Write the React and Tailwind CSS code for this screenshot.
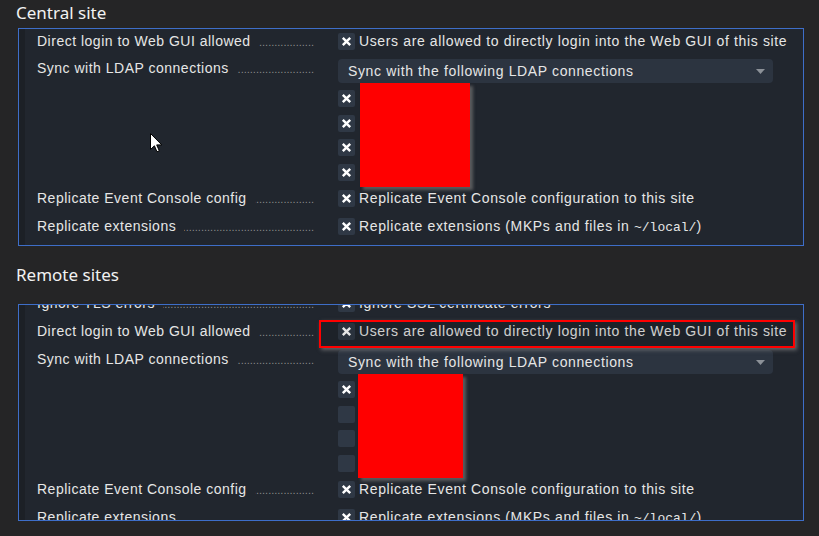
import React from "react";

const FONT = "font-['Liberation_Sans',Arial,sans-serif] text-[14px] text-[#e6e6e6]";
const TXT = `${FONT} tracking-[0.5px]`;
const VTXT = `${FONT} tracking-[0.63px]`;

function XBox({ checked = true }) {
  return (
    <div className="w-[17px] h-[17px] rounded-[2px] bg-[#2f3845] flex items-center justify-center shrink-0">
      {checked && (
        <svg width="17" height="17" viewBox="0 0 17 17">
          <path d="M4.8 4.8 L12.2 12.2 M12.2 4.8 L4.8 12.2" stroke="#ffffff" strokeWidth="2.4" strokeLinecap="butt" />
        </svg>
      )}
    </div>
  );
}

function Label({ text, top = false }) {
  return (
    <div className={`w-[289px] pl-[12px] flex items-baseline shrink-0 ${top ? "self-start leading-[18px]" : ""}`}>
      <span className={`${TXT} whitespace-nowrap`}>{text}</span>
      <div className="flex-1 ml-[8px] flex justify-end overflow-hidden">
        <span className="whitespace-nowrap font-['Liberation_Sans',Arial,sans-serif] text-[11px] text-[#8a8a8a]">
          {".".repeat(120)}
        </span>
      </div>
    </div>
  );
}

function CheckRow({ label, value, h, children }) {
  return (
    <div className={`relative flex items-center shrink-0 ${h}`}>
      <Label text={label} />
      <div className="ml-[24px] flex items-center gap-[4px]">
        <XBox />
        <span className={`${VTXT} whitespace-nowrap`}>{value}</span>
      </div>
      {children}
    </div>
  );
}

function Dropdown({ mt }) {
  return (
    <div className={`flex shrink-0 ${mt}`}>
      <Label text="Sync with LDAP connections" top />
      <div className="ml-[24px] w-[435px] h-[24px] rounded-[4px] bg-[#2c3440] flex items-center justify-between pl-[10px] pr-[8px]">
        <span className={`${VTXT} whitespace-nowrap`}>Sync with the following LDAP connections</span>
        <svg width="9" height="5" viewBox="0 0 9 5">
          <path d="M0 0 L9 0 L4.5 5 Z" fill="#8c9198" />
        </svg>
      </div>
    </div>
  );
}

function LdapList({ checks, redMl, redW }) {
  return (
    <div className="flex shrink-0 mt-[3px]">
      <div className="w-[289px] shrink-0" />
      <div className="ml-[24px] flex">
        <div className="flex flex-col">
          {checks.map((c, i) => (
            <div key={i} className="h-[24.7px] flex items-center shrink-0">
              <XBox checked={c} />
            </div>
          ))}
        </div>
        <div className={`${redMl} ${redW} -mt-[3px] -mb-[2.2px] h-[104px] bg-[#ff0000] shadow-[3px_3px_3px_rgba(110,110,110,0.75)]`} />
      </div>
    </div>
  );
}

function Replicate() {
  return (
    <>
      <CheckRow h="h-[28px]" label="Replicate Event Console config" value="Replicate Event Console configuration to this site" />
      <CheckRow
        h="h-[28px]"
        label="Replicate extensions"
        value={
          <>
            Replicate extensions (MKPs and files in{" "}
            <span className="font-['Liberation_Mono',monospace] text-[13px] tracking-normal">~/local/</span>)
          </>
        }
      />
    </>
  );
}

function Heading({ children, cls = "" }) {
  return (
    <div className={`h-[28px] pl-[16px] pt-[1px] ${cls}`}>
      <span className="font-['Noto_Sans',sans-serif] text-[17px] leading-[24px] text-[#f2f2f2]">{children}</span>
    </div>
  );
}

export default function App() {
  return (
    <div className="w-[819px] h-[536px] bg-[#252526] overflow-hidden">
      <Heading>Central site</Heading>
      <div className="relative ml-[18px] w-[786px] h-[218px] border border-[#3e6ec8] bg-[#21262e] flex">
        <div className="w-[6px] bg-[#1c2026] shrink-0" />
        <div className="flex-1 flex flex-col pt-[2px]">
          <CheckRow h="h-[20px]" label="Direct login to Web GUI allowed" value="Users are allowed to directly login into the Web GUI of this site" />
          <Dropdown mt="mt-[8px]" />
          <LdapList checks={[true, true, true, true]} redMl="ml-[5px]" redW="w-[110px]" />
          <Replicate />
        </div>
        <svg className="absolute left-[131px] top-[104px]" width="13" height="20" viewBox="0 0 13 20">
          <path d="M0.5 0.5 L0.5 16.5 L4.4 12.8 L7 18.8 L9.3 17.8 L6.7 11.9 L11.8 11.9 Z" fill="#ffffff" stroke="#000000" strokeWidth="1" strokeLinejoin="miter" />
        </svg>
      </div>

      <Heading cls="mt-[16px]">Remote sites</Heading>
      <div className="mt-[14px] ml-[18px] w-[786px] h-[217px] border border-[#3e6ec8] bg-[#21262e] flex overflow-hidden">
        <div className="w-[6px] bg-[#1c2026] shrink-0" />
        <div className="flex-1 flex flex-col -mt-[16px]">
          <CheckRow h="h-[28px]" label="Ignore TLS errors" value="Ignore SSL certificate errors" />
          <CheckRow h="h-[28px]" label="Direct login to Web GUI allowed" value="Users are allowed to directly login into the Web GUI of this site">
            <div className="absolute left-[294px] top-[3px] w-[476px] h-[28px] border-2 border-[#ff0000] bg-black/10 shadow-[2px_2px_4px_rgba(150,150,150,0.6)]" />
          </CheckRow>
          <Dropdown mt="mt-[5px]" />
          <LdapList checks={[true, false, false, false]} redMl="ml-[3px]" redW="w-[105px]" />
          <Replicate />
        </div>
      </div>
    </div>
  );
}
